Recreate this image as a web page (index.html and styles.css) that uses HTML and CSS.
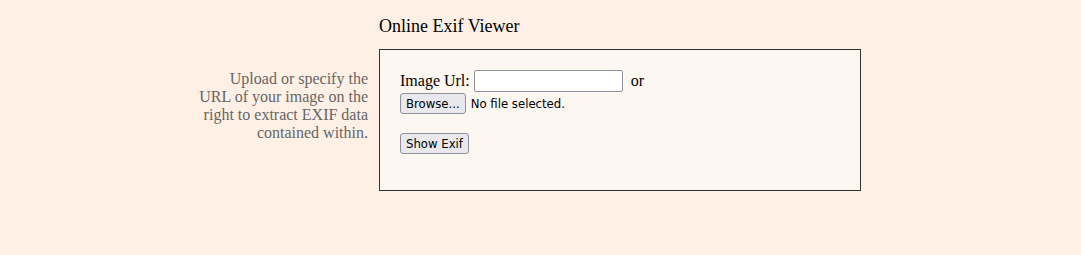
FILE: index.html
```html
<!DOCTYPE html>
<html>
<head>
    <title>Online Exif Viewer</title>
    <meta http-equiv="Content-Type" content="text/html; charset=UTF-8">
    <link rel="stylesheet" href="styles.css">
</head>
<body>
    <div class="page">
        <div class="side">
            <p class="intro">Upload or specify the URL of your image on the right to extract EXIF data contained within.</p>
        </div>
        <div class="content">
            <h1>Online Exif Viewer</h1>
            <form class="viewer">
                <div class="row">
                    <label for="url">Image Url:</label>
                    <input type="text" id="url" class="url">
                    <span class="or">or</span>
                </div>
                <div class="row">
                    <button type="button" class="btn">Browse...</button>
                    <span class="file-name">No file selected.</span>
                </div>
                <div class="row submit">
                    <button type="button" class="btn">Show Exif</button>
                </div>
            </form>
        </div>
    </div>
</body>
</html>
```

FILE: styles.css
```css
body {
    margin: 0;
    background: #fef0e5;
    font-family: "Liberation Serif", "Times New Roman", serif;
    font-size: 16px;
    color: #000;
}
.page {
    display: flex;
    gap: 11px;
    padding-left: 196px;
}
.side {
    width: 172px;
    padding-top: 70px;
}
.intro {
    margin: 0;
    text-align: right;
    color: #666;
    line-height: 18px;
}
.content {
    width: 482px;
}
h1 {
    margin: 16px 0 12px;
    font-size: 18px;
    font-weight: normal;
    line-height: 21px;
}
.viewer {
    background: #fdf7f1;
    border: 1px solid #333;
    padding: 20px 20px 36px;
    height: 84px;
}
.row {
    display: flex;
    align-items: center;
}
.row label {
    margin-right: 4px;
}
.url {
    width: 145px;
    height: 18px;
    padding: 1px;
    border: 1px solid #8f8f9d;
    border-radius: 2px;
    background: #fff;
    margin: 0;
}
.or {
    margin-left: 8px;
}
.btn {
    font-family: "DejaVu Sans Condensed", "DejaVu Sans", Verdana, sans-serif;
    font-stretch: condensed;
    font-size: 13px;
    height: 21px;
    padding: 0 5px;
    margin: 1px 0 0;
    background: #e9e9ed;
    border: 1px solid #8f8f9d;
    border-radius: 3px;
    color: #000;
}
.file-name {
    font-family: "DejaVu Sans Condensed", "DejaVu Sans", Verdana, sans-serif;
    font-stretch: condensed;
    font-size: 13px;
    margin-left: 5px;
}
.submit {
    margin-top: 18px;
}
```
